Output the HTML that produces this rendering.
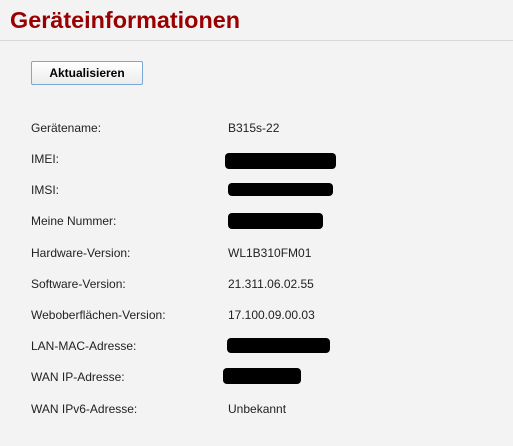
<!DOCTYPE html>
<html><head><style>
body{margin:0;width:513px;height:446px;background:#f3f3f3;font-family:"Liberation Sans",Arial,sans-serif;position:relative;overflow:hidden}
h1{position:absolute;left:10px;top:7px;margin:0;font-size:23.4px;font-weight:bold;color:#990000}
.line{position:absolute;left:0;top:40px;width:513px;height:1px;background:#d8d8d8}
.btn{position:absolute;left:31px;top:61px;width:110px;height:22px;border:1px solid #7aa7d6;border-radius:2px;background:linear-gradient(#fff,#ececec);font-size:12px;font-weight:bold;text-align:center;line-height:22px;color:#000}
.l,.v{position:absolute;font-size:12px;color:#222}
.l{left:31px}.v{left:228px}
.b{position:absolute;background:#000;border-radius:4px}
</style></head><body>
<h1>Geräteinformationen</h1>
<div class="line"></div>
<div class="btn">Aktualisieren</div>
<div class="l" style="top:121px">Gerätename:</div><div class="v" style="top:121px">B315s-22</div>
<div class="l" style="top:152px">IMEI:</div>
<div class="l" style="top:183px">IMSI:</div>
<div class="l" style="top:214px">Meine Nummer:</div>
<div class="l" style="top:246px">Hardware-Version:</div><div class="v" style="top:246px">WL1B310FM01</div>
<div class="l" style="top:277px">Software-Version:</div><div class="v" style="top:277px">21.311.06.02.55</div>
<div class="l" style="top:308px">Weboberflächen-Version:</div><div class="v" style="top:308px">17.100.09.00.03</div>
<div class="l" style="top:339px">LAN-MAC-Adresse:</div>
<div class="l" style="top:370px">WAN IP-Adresse:</div>
<div class="l" style="top:402px">WAN IPv6-Adresse:</div><div class="v" style="top:402px">Unbekannt</div>
<div class="b" style="left:225px;top:153px;width:111px;height:16px"></div>
<div class="b" style="left:228px;top:183px;width:105px;height:13px"></div>
<div class="b" style="left:228px;top:213px;width:95px;height:16px"></div>
<div class="b" style="left:227px;top:338px;width:103px;height:15px"></div>
<div class="b" style="left:223px;top:368px;width:78px;height:16px"></div>
</body></html>
